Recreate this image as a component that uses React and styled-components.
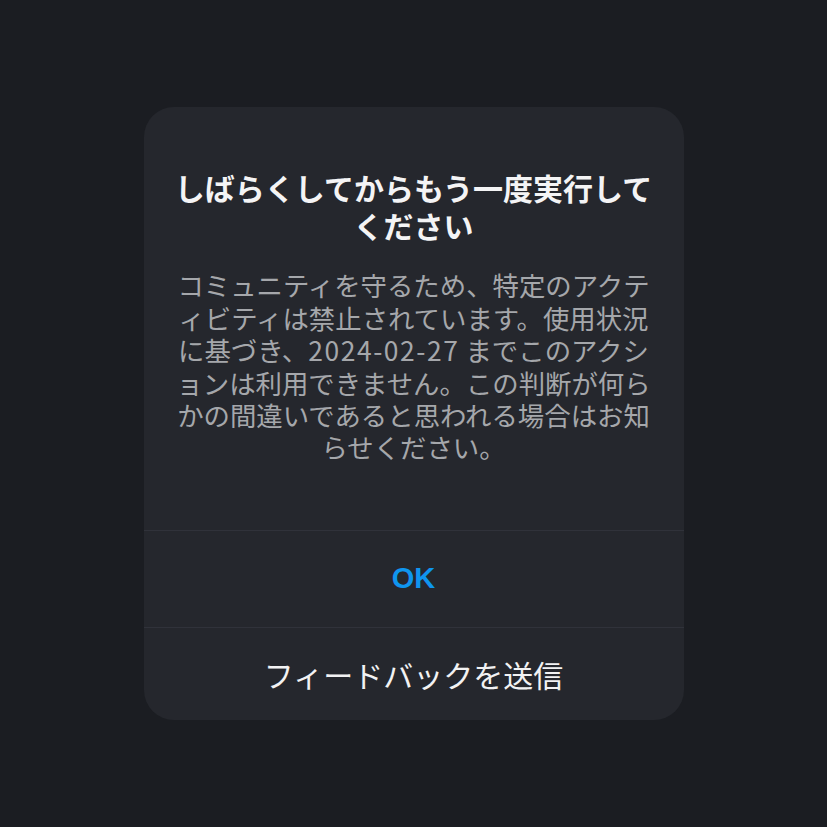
import styled, { createGlobalStyle } from "styled-components";

const GlobalStyle = createGlobalStyle`
  html, body {
    margin: 0;
    padding: 0;
    background: #1b1d22;
  }
  body {
    font-family: "Noto Sans CJK JP", "Noto Sans", sans-serif;
  }
`;

const Screen = styled.div`
  min-height: 100vh;
  display: flex;
  align-items: center;
  justify-content: center;
  background: #1b1d22;
`;

const Dialog = styled.div`
  width: 540px;
  background: #25272d;
  border-radius: 30px;
  overflow: hidden;
  display: flex;
  flex-direction: column;
`;

const Body = styled.div`
  padding: 61px 28px 66px;
  display: flex;
  flex-direction: column;
  gap: 25px;
  text-align: center;
  line-break: loose;
`;

const Title = styled.h1`
  margin: 0;
  font-size: 30px;
  line-height: 38px;
  font-weight: 700;
  color: #f4f4f5;
`;

const Message = styled.p`
  margin: 0;
  font-size: 26.4px;
  line-height: 32.4px;
  font-weight: 400;
  color: #a5a7ab;
`;

const DateText = styled.span`
  letter-spacing: 0.06em;
`;

const Action = styled.button`
  display: flex;
  align-items: center;
  justify-content: center;
  height: ${(props) => props.height}px;
  border: none;
  border-top: 1px solid #30323a;
  background: transparent;
  padding: 0;
  color: ${(props) => (props.primary ? "#0f95ee" : "#f2f2f3")};
  font-family: ${(props) =>
    props.primary
      ? '"Liberation Sans", Arial, sans-serif'
      : '"Noto Sans CJK JP", sans-serif'};
  font-size: ${(props) => (props.primary ? "29px" : "30px")};
  font-weight: ${(props) => (props.primary ? 700 : 400)};
  cursor: pointer;
`;

function App() {
  return (
    <Screen lang="ja">
      <GlobalStyle />
      <Dialog>
        <Body>
          <Title>しばらくしてからもう一度実行してください</Title>
          <Message>
            コミュニティを守るため、特定のアクティビティは禁止されています。使用状況に基づき、
            <DateText>2024-02-27</DateText>{" "}までこのアクシ<wbr />ョンは利用できません。この判断が何らかの間違いであると思われる場合はお知らせください。
          </Message>
        </Body>
        <Action primary height={97}>OK</Action>
        <Action height={93}>フィードバックを送信</Action>
      </Dialog>
    </Screen>
  );
}

export default App;
